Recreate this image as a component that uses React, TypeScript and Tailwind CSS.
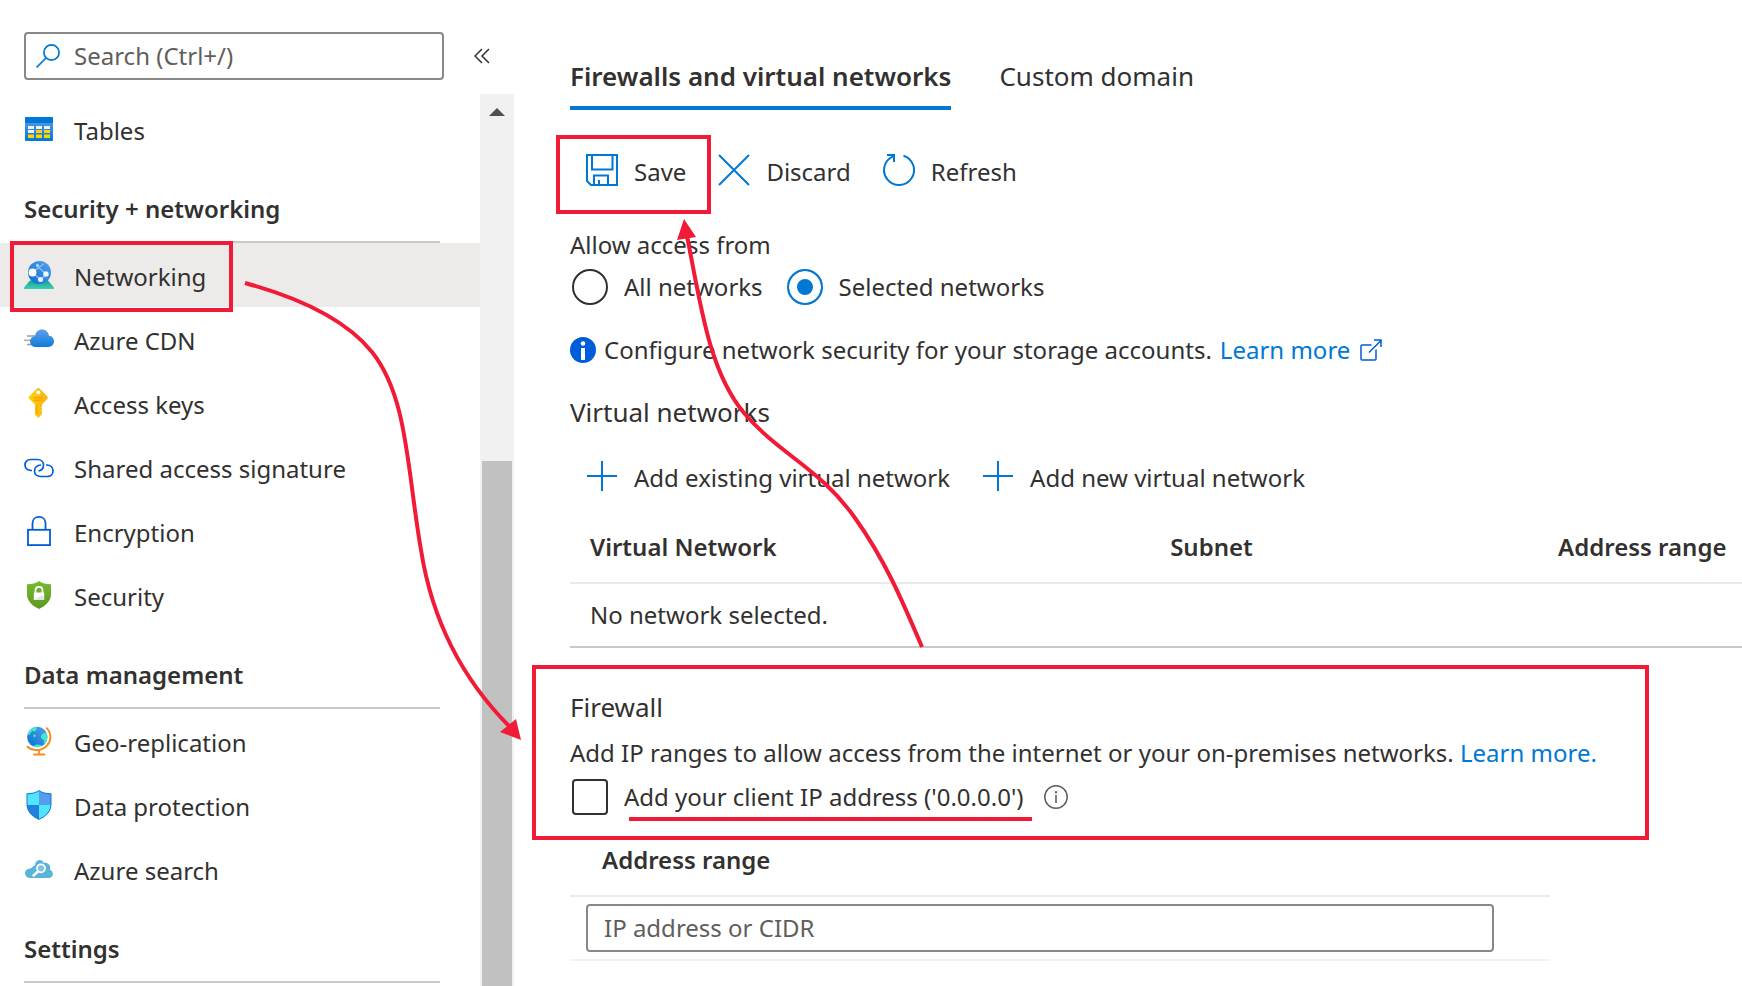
import React from "react";

type IconProps = { className?: string };

function TablesIcon() {
  return (
    <svg viewBox="0 0 30 30" className="size-[30px]" aria-hidden="true">
      <defs>
        <linearGradient id="tbl" x1="0" y1="0" x2="0" y2="1">
          <stop offset="0" stopColor="#5ea0ef" />
          <stop offset="1" stopColor="#0078d4" />
        </linearGradient>
      </defs>
      <rect x="1" y="3" width="28" height="24" rx="1" fill="url(#tbl)" />
      <path d="M2 3h26a1 1 0 0 1 1 1v5H1V4a1 1 0 0 1 1-1z" fill="#0078d4" />
      {[4, 12, 20].map((x) => (
        <g key={x}>
          <rect x={x} y="12" width="6" height="3" fill="#f2f2f2" />
          <rect x={x} y="16" width="6" height="3" fill={x === 4 ? "#f2f2f2" : "#ffd400"} />
          <rect x={x} y="20.5" width="6" height="3.5" fill="#ffd400" />
        </g>
      ))}
    </svg>
  );
}

function NetworkingIcon() {
  return (
    <svg viewBox="0 0 30 30" className="size-[30px]" aria-hidden="true">
      <defs>
        <linearGradient id="base" x1="0" y1="0" x2="0" y2="1">
          <stop offset="0" stopColor="#1d9f8d" />
          <stop offset="1" stopColor="#3dcfb5" />
        </linearGradient>
        <linearGradient id="globe" x1="0" y1="1" x2="1" y2="0">
          <stop offset="0" stopColor="#0072cf" />
          <stop offset="1" stopColor="#5b9fee" />
        </linearGradient>
      </defs>
      <path d="M6 20.500h18l6 7v1.500H0v-1.500z" fill="url(#base)" />
      <circle cx="15.500" cy="12.500" r="11.500" fill="url(#globe)" />
      <path d="M9 12 20 3.800M12 5l10.500 9.500M17 20l5-6M9 13l7.500 6.500" stroke="#8fc0f2" strokeWidth="1.300" fill="none" />
      <circle cx="8.500" cy="12.500" r="3.900" fill="#fff" />
      <circle cx="22" cy="14" r="2.700" fill="#f0f6fc" />
      <circle cx="16.500" cy="19.500" r="2.500" fill="#f0f6fc" />
      <circle cx="13.500" cy="5.500" r="1.400" fill="#b9d9f7" />
    </svg>
  );
}

function CdnIcon() {
  return (
    <svg viewBox="0 0 30 30" className="size-[30px]" aria-hidden="true">
      <defs>
        <linearGradient id="cdn" x1="0" y1="0" x2="0" y2="1">
          <stop offset="0" stopColor="#5ea0ef" />
          <stop offset="1" stopColor="#0f7cd8" />
        </linearGradient>
      </defs>
      <path d="M3 12h8M3 20.500h8" stroke="#9a9a9a" strokeWidth="1.600" />
      <path d="M0 16.300h9" stroke="#b5b5b5" strokeWidth="1.800" />
      <path
        d="M11.500 23A5.500 5.500 0 0 1 6 17.600c0-3 2.300-5 5-5.300C11.500 8 14.500 5.500 18 5.500c3.700 0 6.500 2.600 7 6.200 3 .2 5 2.600 5 5.600 0 3.200-2.400 5.700-5.600 5.700z"
        fill="url(#cdn)"
      />
    </svg>
  );
}

function KeyIcon() {
  return (
    <svg viewBox="0 0 30 30" className="size-[30px]" aria-hidden="true">
      <defs>
        <linearGradient id="key" x1="0" y1="0" x2="1" y2="0">
          <stop offset="0" stopColor="#ffd000" />
          <stop offset="1" stopColor="#fbb315" />
        </linearGradient>
      </defs>
      <path
        d="M13 .6a2 2 0 0 1 2.600 0l7.600 7.600c.8.800.8 1.900 0 2.700L18 16.500v2l-.8 1 .8 1v1.300l-.8 1 .8 1V26l-3.200 3.500c-.3.400-.7.400-1 0L11 26.500v-10l-5.600-5.600c-.8-.8-.8-1.900 0-2.700z"
        fill="url(#key)"
      />
      <circle cx="14.300" cy="4.500" r="2.100" fill="#fff" />
      <path d="M9.500 9.800h9.500M9.500 12.200h9.500M13 17v9" stroke="#ff9300" strokeWidth="1" />
    </svg>
  );
}

function LinkIcon() {
  return (
    <svg viewBox="0 0 30 30" className="size-[30px]" fill="none" stroke="#015cda" strokeWidth="1.700" aria-hidden="true">
      <path d="M8 18.500H6.500C3 18 1 15.800 1 13s2.200-5.500 5.500-5.500h7c3.500 0 6 2.200 6 5.500s-2.300 5.500-5 6" />
      <path d="M17 13c-3.500.2-6.500 2.400-6.500 6 0 3.200 2.500 5.500 6 5.500h7c3.300 0 5.500-2.500 5.500-5.500 0-3.200-2.200-5.700-5.500-6H22" />
    </svg>
  );
}

function LockIcon() {
  return (
    <svg viewBox="0 0 30 30" className="size-[30px]" fill="none" stroke="#015cda" strokeWidth="1.800" aria-hidden="true">
      <rect x="4" y="13.800" width="22" height="15.300" />
      <path d="M8.500 13.500V7.200C8.500 3.500 11.300.9 15 .9s6.500 2.600 6.500 6.300v6.300" />
    </svg>
  );
}

function SecurityIcon() {
  return (
    <svg viewBox="0 0 30 30" className="size-[30px]" aria-hidden="true">
      <defs>
        <linearGradient id="sec" x1="0" y1="0" x2="0" y2="1">
          <stop offset="0" stopColor="#76bc2d" />
          <stop offset="1" stopColor="#5e9624" />
        </linearGradient>
      </defs>
      <path d="M15 1c3 2.500 7 3.200 12 3.200v10.300c0 7-6 11.500-12 14.500-6-3-12-7.500-12-14.500V4.200C8 4.200 12 3.500 15 1z" fill="url(#sec)" />
      <path d="M11.500 13V10.300C11.500 8.200 13 6.800 15 6.800s3.500 1.400 3.500 3.500V13" fill="none" stroke="#fff" strokeWidth="1.800" />
      <rect x="9.800" y="12.500" width="10.400" height="7.600" rx=".6" fill="#fff" />
      <path d="m10 20 7-4.500 3 1v3.600z" fill="#e3e3e3" />
    </svg>
  );
}

function GeoIcon() {
  return (
    <svg viewBox="0 0 30 30" className="size-[30px]" aria-hidden="true">
      <defs>
        <linearGradient id="geo" x1="0" y1="1" x2="1" y2="0">
          <stop offset="0" stopColor="#0072cf" />
          <stop offset="1" stopColor="#5b9fee" />
        </linearGradient>
        <clipPath id="geoclip">
          <circle cx="13.300" cy="11" r="10.200" />
        </clipPath>
      </defs>
      <circle cx="13.300" cy="11" r="10.200" fill="url(#geo)" />
      <g clipPath="url(#geoclip)" fill="#42e8ca">
        <path d="M7.500 1.500 12 0l1 3-2 2.500-3-.5-2.500 4L3 8z" />
        <path d="M24 7c-3-1-7 .5-7 4 0 2 2 3 3.500 3l-1 2 2 3 4-6z" />
        <circle cx="10.500" cy="9.800" r="1.400" />
        <path d="m10 19.500 3-1 4 .5 1 3h-7z" />
      </g>
      <path d="M22.800 2.200C28 8 27.300 16 22 20.500 16 25.500 8 25 3.500 20.800" fill="none" stroke="#f78d1e" strokeWidth="2" strokeLinecap="round" />
      <path d="M15 24v4.500M10 28.500h10.500" stroke="#f78d1e" strokeWidth="1.800" strokeLinecap="round" />
    </svg>
  );
}

function ShieldIcon() {
  return (
    <svg viewBox="0 0 30 30" className="size-[30px]" aria-hidden="true">
      <defs>
        <clipPath id="shieldclip">
          <path d="M15 1c3 2.500 7 3.200 11.500 3.200v10.300c0 7-5.500 11.700-11.500 14.500-6-2.800-11.500-7.500-11.500-14.500V4.200C8 4.200 12 3.500 15 1z" />
        </clipPath>
      </defs>
      <path d="M15 0c3 2.500 7 3.200 12.500 3.200v11.300c0 7.500-6.500 12.700-12.500 15.500C9 27.200 2.500 22 2.500 14.500V3.200C8 3.200 12 2.500 15 0z" fill="#0f7ad8" />
      <g clipPath="url(#shieldclip)">
        <rect width="15" height="15" fill="#50e6ff" />
        <rect x="15" width="15" height="15" fill="#559cec" />
        <rect y="15" width="15" height="15" fill="#2080dc" />
        <rect x="15" y="15" width="15" height="15" fill="#50e6ff" />
      </g>
    </svg>
  );
}

function CloudSearchIcon() {
  return (
    <svg viewBox="0 0 30 30" className="size-[30px]" aria-hidden="true">
      <path
        d="M6 24a5 5 0 0 1-5-4.700c0-2.500 1.700-4.300 4-4.600 1.500-.1 2.500-.8 3.500-1.800 1-1 1.500-1.500 2.500-1.700.2-3 2-5.200 4.500-5.200 2 0 3.700 1.300 4.200 3 2.800-.8 6.300 1 6.600 4.700.1 1-.1 1.800-.4 2.400 1.800.5 2.900 1.900 2.900 3.700A4 4 0 0 1 25 24z"
        fill="#59b4d9"
      />
      <circle cx="17" cy="14.300" r="4" fill="#7cc4e2" stroke="#fff" strokeWidth="1.800" />
      <path d="m14 17.500-4.500 4" stroke="#fff" strokeWidth="2.400" strokeLinecap="round" />
    </svg>
  );
}

function SearchIcon({ className }: IconProps) {
  return (
    <svg viewBox="0 0 24 24" className={className} fill="none" stroke="#0078d4" strokeWidth="1.700" aria-hidden="true">
      <circle cx="15.500" cy="8.500" r="7.600" />
      <path d="M10 14 .6 23.400" />
    </svg>
  );
}

function SaveIcon() {
  return (
    <svg viewBox="0 0 32 32" className="size-8" fill="none" stroke="#0078d4" strokeWidth="2" aria-hidden="true">
      <path d="M1 1h30v30H5l-4-4z" />
      <path d="M6 1v14.500h20.500V1" />
      <path d="M8 31V21.500h14V31M13 31v-5" />
    </svg>
  );
}

function DiscardIcon() {
  return (
    <svg viewBox="0 0 32 32" className="size-8" fill="none" stroke="#0078d4" strokeWidth="2" aria-hidden="true">
      <path d="m1 1 30 30M31 1 1 31" />
    </svg>
  );
}

function RefreshIcon() {
  return (
    <svg viewBox="0 0 32 32" className="size-8" fill="none" stroke="#0078d4" strokeWidth="2" aria-hidden="true">
      <path d="M20.500 1.700A15 15 0 1 1 10 2.300" />
      <path d="M4 1h7v7" />
    </svg>
  );
}

function PlusIcon() {
  return (
    <svg viewBox="0 0 32 32" className="size-8" fill="none" stroke="#0078d4" strokeWidth="2" aria-hidden="true">
      <path d="M16 1v30M1 16h30" />
    </svg>
  );
}

const sections = [
  {
    title: "",
    items: [{ label: "Tables", icon: <TablesIcon /> }],
  },
  {
    title: "Security + networking",
    items: [
      { label: "Networking", icon: <NetworkingIcon />, active: true },
      { label: "Azure CDN", icon: <CdnIcon /> },
      { label: "Access keys", icon: <KeyIcon /> },
      { label: "Shared access signature", icon: <LinkIcon /> },
      { label: "Encryption", icon: <LockIcon /> },
      { label: "Security", icon: <SecurityIcon /> },
    ],
  },
  {
    title: "Data management",
    items: [
      { label: "Geo-replication", icon: <GeoIcon /> },
      { label: "Data protection", icon: <ShieldIcon /> },
      { label: "Azure search", icon: <CloudSearchIcon /> },
    ],
  },
  { title: "Settings", items: [] },
] as { title: string; items: { label: string; icon: React.ReactNode; active?: boolean }[] }[];

function Sidebar() {
  return (
    <aside className="flex w-[514px] shrink-0 flex-col">
      <div className="flex items-center gap-[30px] px-6 pt-8 pb-[14px]">
        <label className="flex h-12 w-[420px] items-center gap-[14px] rounded border-2 border-[#8a8886] px-2.5">
          <SearchIcon className="size-6 shrink-0" />
          <input
            type="text"
            aria-label="Search menu"
            placeholder="Search (Ctrl+/)"
            className="w-full min-w-0 bg-transparent outline-none placeholder:text-[#605e5c]"
          />
        </label>
        <button type="button" aria-label="Collapse menu">
          <svg viewBox="0 0 16 16" className="size-4" fill="none" stroke="#323130" strokeWidth="1.500" aria-hidden="true">
            <path d="M8 1 1 8l7 7M15 1 8 8l7 7" />
          </svg>
        </button>
      </div>
      <div className="flex min-h-0 flex-1">
        <nav className="min-w-0 flex-1 overflow-hidden pt-[3px]">
          {sections.map((s) => (
            <section key={s.title}>
              {s.title && (
                <h2 className="mr-10 ml-6 border-b-2 border-[#c8c8c8] pt-8 pb-4 font-semibold">{s.title}</h2>
              )}
              {s.items.map((item) => (
                <a
                  key={item.label}
                  href="#"
                  className={
                    item.active
                      ? "relative flex h-16 items-center gap-5 bg-[#edebe9] pl-6"
                      : "flex h-16 items-center gap-5 pl-6"
                  }
                >
                  {item.icon}
                  <span className="pt-1">{item.label}</span>
                  {item.active && (
                    <span className="absolute -top-0.5 left-2.5 h-[71px] w-[223px] border-4 border-[#f11b37]" />
                  )}
                </a>
              ))}
            </section>
          ))}
        </nav>
        <div className="flex w-[34px] flex-col items-center bg-[#f1f1f1]" aria-hidden="true">
          <svg viewBox="0 0 16 8" className="mt-[14px] mb-[345px] h-2 w-4 shrink-0">
            <path d="m8 0 8 8H0z" fill="#505050" />
          </svg>
          <div className="w-[30px] flex-1 bg-[#c1c1c1]" />
        </div>
      </div>
    </aside>
  );
}

function Command({ icon, children }: { icon: React.ReactNode; children: React.ReactNode }) {
  return (
    <button type="button" className="flex items-center gap-4">
      {icon}
      <span className="pt-1">{children}</span>
    </button>
  );
}

function Radio({ label, checked }: { label: string; checked?: boolean }) {
  return (
    <label className="flex items-center gap-4">
      <input
        type="radio"
        name="access"
        defaultChecked={checked}
        className="size-9 appearance-none rounded-full border-2 border-[#323130] checked:border-[#0078d4] checked:bg-[#0078d4] checked:shadow-[inset_0_0_0_8px_white]"
      />
      {label}
    </label>
  );
}

function Main() {
  return (
    <main className="min-w-0 flex-1 pt-[58px] pl-14">
      <div role="tablist" className="flex gap-12 text-[26px] leading-9">
        <button type="button" role="tab" aria-selected="true" className="border-b-4 border-[#0078d4] pb-3 font-semibold">
          Firewalls and virtual networks
        </button>
        <button type="button" role="tab" aria-selected="false" className="border-b-4 border-transparent pb-3">
          Custom domain
        </button>
      </div>

      <div className="mt-7 flex h-16 items-center gap-8 pl-4">
        <div className="relative">
          <Command icon={<SaveIcon />}>Save</Command>
          <span className="pointer-events-none absolute -top-[17px] -left-[30px] h-[79px] w-[155px] border-4 border-[#f11b37]" />
        </div>
        <Command icon={<DiscardIcon />}>Discard</Command>
        <Command icon={<RefreshIcon />}>Refresh</Command>
      </div>

      <fieldset>
        <legend className="pt-[27px]">Allow access from</legend>
        <div className="mt-2 flex gap-6 pl-0.5">
          <Radio label="All networks" />
          <Radio label="Selected networks" checked />
        </div>
      </fieldset>

      <p className="mt-[27px] flex h-9 items-center gap-2">
        <svg viewBox="0 0 26 26" className="size-[26px] shrink-0" aria-hidden="true">
          <circle cx="13" cy="13" r="13" fill="#015cda" />
          <circle cx="13" cy="6.500" r="2.300" fill="#fff" />
          <path d="M11 11h4v12h-4z" fill="#fff" />
        </svg>
        <span>Configure network security for your storage accounts.</span>
        <a href="#" className="flex items-center gap-2.5 text-[#0078d4]">
          Learn more
          <svg viewBox="0 0 22 22" className="size-[22px]" fill="none" stroke="#015cda" strokeWidth="1.500" aria-hidden="true">
            <path d="M11.500 6H2a1 1 0 0 0-1 1v13a1 1 0 0 0 1 1h13a1 1 0 0 0 1-1v-9.500M9 13.500 21 1.500M14 1h7v7" />
          </svg>
        </a>
      </p>

      <h2 className="mt-[26px] text-[26px] leading-9">Virtual networks</h2>
      <div className="mt-[22px] flex h-12 items-center gap-8 pl-4">
        <Command icon={<PlusIcon />}>Add existing virtual network</Command>
        <Command icon={<PlusIcon />}>Add new virtual network</Command>
      </div>

      <table className="mt-[11px] w-full table-fixed border-collapse text-left whitespace-nowrap">
        <thead>
          <tr className="h-[72px] border-b-2 border-[#eaeaea]">
            <th className="w-[49.5%] pl-5 font-semibold">Virtual Network</th>
            <th className="w-[33.1%] pl-5 font-semibold">Subnet</th>
            <th className="pl-5 font-semibold">Address range</th>
          </tr>
        </thead>
        <tbody>
          <tr className="h-16 border-b-2 border-[#c8c8c8]">
            <td colSpan={3} className="pl-5">
              No network selected.
            </td>
          </tr>
        </tbody>
      </table>

      <section className="mt-[17px] mr-[93px] -ml-[38px] border-4 border-[#f11b37] pt-5 pb-[21px] pl-[34px]">
        <h2 className="text-[26px] leading-9">Firewall</h2>
        <p className="mt-3 whitespace-nowrap">
          Add IP ranges to allow access from the internet or your on-premises networks.{" "}
          <a href="#" className="text-[#0078d4]">
            Learn more.
          </a>
        </p>
        <div className="mt-2.5 flex items-center gap-5 pl-0.5">
          <label className="relative flex items-center gap-4">
            <input type="checkbox" className="size-9 appearance-none rounded border-2 border-[#323130]" />
            Add your client IP address ('0.0.0.0')
            <span className="absolute -right-2 -bottom-1.5 left-[57px] h-1 bg-[#f11b37]" />
          </label>
          <svg viewBox="0 0 24 24" className="size-6" aria-hidden="true">
            <circle cx="12" cy="12" r="11.200" fill="none" stroke="#605e5c" strokeWidth="1.500" />
            <path d="M11.200 10h1.600v8h-1.600zM11 6.200h2v2h-2z" fill="#605e5c" />
          </svg>
        </div>
      </section>

      <table className="w-full max-w-[980px] border-collapse text-left">
        <thead>
          <tr className="border-b-2 border-[#eaeaea]">
            <th className="pt-1 pb-[19px] pl-8 font-semibold">Address range</th>
          </tr>
        </thead>
        <tbody>
          <tr className="border-b-2 border-[#f3f2f1]">
            <td className="py-[7px] pr-14 pl-4">
              <input
                type="text"
                aria-label="Address range"
                placeholder="IP address or CIDR"
                className="block h-12 w-full rounded border-2 border-[#8a8886] px-4 pb-0.5 outline-none placeholder:text-[#605e5c]"
              />
            </td>
          </tr>
        </tbody>
      </table>
    </main>
  );
}

function Arrows() {
  return (
    <svg
      viewBox="0 0 1742 986"
      className="pointer-events-none absolute top-0 left-0 h-[986px] w-[1742px] max-w-none"
      fill="none"
      stroke="#f11b37"
      strokeWidth="4"
      aria-hidden="true"
    >
      <path d="M245 283C300 298 347 321 372 352C408 397 407 470 421 550C432 620 463 680 510 727" />
      <path d="M521 740 500 732 516 719z" fill="#f11b37" stroke="none" />
      <path d="M922 647C902 600 885 560 855 518C820 468 780 455 744 413C708 370 700 300 687 236" />
      <path d="M684 219 696 237 677 240z" fill="#f11b37" stroke="none" />
    </svg>
  );
}

export default function App() {
  return (
    <div className="relative flex h-screen overflow-hidden bg-white font-['Noto_Sans','Open_Sans',sans-serif] text-[24px] leading-8 text-[#323130]">
      <Sidebar />
      <Main />
      <Arrows />
    </div>
  );
}
